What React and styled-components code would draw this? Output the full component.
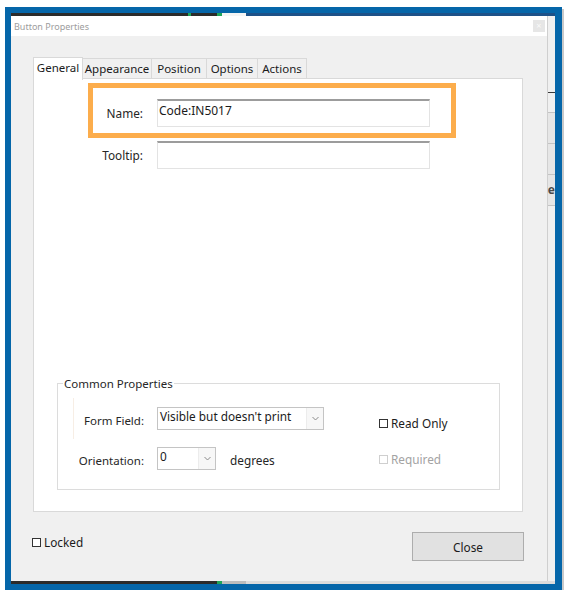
import React from "react";
import styled, { createGlobalStyle } from "styled-components";

const GlobalStyle = createGlobalStyle`
  body {
    margin: 0;
    background: #ffffff;
    font-family: "Noto Sans", "Open Sans", sans-serif;
    font-size: 11.5px;
    color: #1b1b1b;
  }
`;

const tabs = [
  { label: "General", w: 50, active: true },
  { label: "Appearance", w: 69 },
  { label: "Position", w: 55 },
  { label: "Options", w: 51 },
  { label: "Actions", w: 49 },
];

const Chevron = () => (
  <svg width="7" height="5" viewBox="0 0 7 5">
    <polyline points="0.5,1 3.5,4 6.5,1" fill="none" stroke="#8a8a8a" strokeWidth="1" />
  </svg>
);

export default () => {
  return <Page>
    <GlobalStyle />
    <Frame>
      <Strip>
        <Seg $w={177} $c="#2b2b2b" />
        <Seg $w={3} $c="#1fa55a" />
        <Seg $w={26} $c="#2b2b2b" />
        <Seg $w={5} $c="#1fa55a" />
        <Seg $w={24} $c="#f4f4f4" />
        <Seg $c="#1d5188" />
      </Strip>
      <Middle>
        <Dialog>
          <TitleBar>
            <Title>Button Properties</Title>
            <TitleClose>×</TitleClose>
          </TitleBar>
          <Body>
            <TabRow>
              {tabs.map(t => <Tab key={t.label} $w={t.w} $active={t.active}>{t.label}</Tab>)}
            </TabRow>
            <Panel>
              <Highlight>
                <FieldRow>
                  <Label>Name:</Label>
                  <TextBox>Code:IN5017</TextBox>
                </FieldRow>
              </Highlight>
              <TooltipRow>
                <Label>Tooltip:</Label>
                <TextBox />
              </TooltipRow>
              <Group>
                <Legend>Common Properties</Legend>
                <GroupBody>
                  <GroupLeft>
                    <PropRow $marked>
                      <PropLabel>Form Field:</PropLabel>
                      <Select $w={167}>
                        <span>Visible but doesn't print</span>
                        <Arrow><Chevron /></Arrow>
                      </Select>
                    </PropRow>
                    <PropRow>
                      <PropLabel>Orientation:</PropLabel>
                      <Select $w={59}>
                        <span>0</span>
                        <Arrow><Chevron /></Arrow>
                      </Select>
                      <Unit>degrees</Unit>
                    </PropRow>
                  </GroupLeft>
                  <GroupRight>
                    <Check><Box />Read Only</Check>
                    <Check $disabled><Box $disabled />Required</Check>
                  </GroupRight>
                </GroupBody>
              </Group>
            </Panel>
            <Footer>
              <Locked><Box />Locked</Locked>
              <CloseButton>Close</CloseButton>
            </Footer>
          </Body>
        </Dialog>
        <BackApp>
          <BackLine />
          <BackButton />
          <BackButton />
          <BackButton>e</BackButton>
        </BackApp>
      </Middle>
      <Strip>
        <Seg $w={206} $c="#2b2b2b" />
        <Seg $w={5} $c="#1fa55a" />
        <Seg $w={24} $c="#bdbdbd" />
        <Seg $c="#dcdcdc" />
      </Strip>
    </Frame>
  </Page>;
};

const Page = styled.div`
  padding: 7px 0 0 5px;
`;

const Frame = styled.div`
  width: 557px;
  height: 583px;
  box-sizing: border-box;
  border: 6px solid #0566a9;
  border-right-width: 7px;
  box-shadow: 2px 2px 0 #c9c9c9;
  display: flex;
  flex-direction: column;
  background: #f0f0f0;
`;

const Strip = styled.div`
  height: 3px;
  display: flex;
`;

const Seg = styled.div`
  background: ${p => p.$c};
  width: ${p => (p.$w ? p.$w + "px" : "auto")};
  flex: ${p => (p.$w ? "none" : 1)};
`;

const Middle = styled.div`
  flex: 1;
  display: flex;
`;

const Dialog = styled.div`
  width: 537px;
  display: flex;
  flex-direction: column;
  background: #f0f0f0;
  border-right: 1px solid #cfcfcf;
  box-sizing: border-box;
`;

const TitleBar = styled.div`
  height: 20px;
  background: #ffffff;
  display: flex;
  align-items: center;
  justify-content: space-between;
  padding: 0 2px 0 3px;
`;

const Title = styled.span`
  font-size: 9px;
  color: #9d9d9d;
`;

const TitleClose = styled.span`
  width: 12px;
  height: 12px;
  background: #e6e6e6;
  color: #fafafa;
  font-size: 9px;
  line-height: 12px;
  text-align: center;
`;

const Body = styled.div`
  flex: 1;
  padding: 21px 0 0 22px;
`;

const TabRow = styled.div`
  display: flex;
  align-items: flex-end;
  height: 22px;
`;

const Tab = styled.div`
  width: ${p => p.$w}px;
  height: ${p => (p.$active ? 23 : 21)}px;
  box-sizing: border-box;
  border: 1px solid #d9d9d9;
  border-bottom: ${p => (p.$active ? "none" : "1px solid #d9d9d9")};
  border-left-width: ${p => (p.$active ? 1 : 0)}px;
  background: ${p => (p.$active ? "#ffffff" : "#f0f0f0")};
  margin-bottom: ${p => (p.$active ? -1 : 0)}px;
  position: relative;
  z-index: ${p => (p.$active ? 1 : 0)};
  display: flex;
  align-items: ${p => (p.$active ? "flex-start" : "center")};
  padding-top: ${p => (p.$active ? 2 : 0)}px;
  justify-content: center;
  font-size: 11.5px;
  white-space: nowrap;
`;

const Panel = styled.div`
  width: 490px;
  height: 434px;
  box-sizing: border-box;
  border: 1px solid #d9d9d9;
  background: #ffffff;
  display: flex;
  flex-direction: column;
  margin-top: -1px;
`;

const Highlight = styled.div`
  width: 368px;
  height: 55px;
  box-sizing: border-box;
  border: 5px solid #fcad4c;
  margin: 4px 0 0 54px;
  padding-top: 11px;
`;

const FieldRow = styled.div`
  display: flex;
  align-items: center;
`;

const TooltipRow = styled(FieldRow)`
  margin: 3px 0 0 59px;
`;

const Label = styled.span`
  width: 50px;
  margin-right: 14px;
  text-align: right;
  font-size: 11.8px;
  color: #262626;
`;

const TextBox = styled.div`
  width: 273px;
  height: 28px;
  box-sizing: border-box;
  border: 1px solid #e3e3e3;
  border-top: 2px solid #9c9c9c;
  padding: 1px 1px;
  font-size: 12px;
  color: #1b1b1b;
`;

const Group = styled.fieldset`
  margin: auto 22px 21px 23px;
  padding: 0;
  height: 114px;
  box-sizing: border-box;
  border: 1px solid #dcdcdc;
`;

const Legend = styled.legend`
  margin-left: 5px;
  padding: 0 1px;
  font-size: 11.5px;
  color: #262626;
`;

const GroupBody = styled.div`
  display: flex;
  padding-top: 7px;
`;

const GroupLeft = styled.div`
  width: 321px;
  display: flex;
  flex-direction: column;
  gap: 8px;
  padding-left: 15px;
  box-sizing: border-box;
`;

const PropRow = styled.div`
  display: flex;
  align-items: center;
  height: ${p => (p.$marked ? 41 : 23)}px;
  border-left: 1px solid ${p => (p.$marked ? "#f7eee5" : "transparent")};
`;

const PropLabel = styled.span`
  width: 70px;
  margin-right: 13px;
  text-align: right;
  font-size: 11.5px;
  color: #262626;
  padding-top: 3px;
`;

const Select = styled.div`
  width: ${p => p.$w}px;
  height: 23px;
  box-sizing: border-box;
  border: 1px solid #c4c4c4;
  background: #ffffff;
  display: flex;
  align-items: flex-start;
  justify-content: space-between;
  padding-left: 2px;
  font-size: 11.8px;
  color: #1b1b1b;
`;

const Arrow = styled.span`
  width: 16px;
  align-self: stretch;
  display: flex;
  align-items: center;
  justify-content: center;
  border-left: 1px solid #ececec;
  background: #f7f7f7;
`;

const Unit = styled.span`
  margin-left: 14px;
  font-size: 11.8px;
  color: #262626;
  padding-top: 3px;
`;

const GroupRight = styled.div`
  display: flex;
  flex-direction: column;
  gap: 20px;
  padding: 17px 0 0 0;
`;

const Check = styled.label`
  display: flex;
  align-items: center;
  height: 16px;
  font-size: 11.8px;
  color: ${p => (p.$disabled ? "#a3a3a3" : "#1b1b1b")};
`;

const Box = styled.span`
  width: 9px;
  height: 9px;
  box-sizing: border-box;
  border: 1px solid ${p => (p.$disabled ? "#cfcfcf" : "#333333")};
  margin-right: 3px;
  background: #ffffff;
`;

const Footer = styled.div`
  width: 492px;
  display: flex;
  justify-content: space-between;
  align-items: flex-start;
  margin: 20px 0 0 -1px;
`;

const Locked = styled(Check)`
  margin-top: 2px;
`;

const CloseButton = styled.button`
  width: 112px;
  height: 29px;
  border: 1px solid #adadad;
  background: #e1e1e1;
  font-family: inherit;
  font-size: 11.8px;
  color: #1b1b1b;
  padding: 0;
`;

const BackApp = styled.div`
  flex: 1;
  background: #f0f0f0;
  padding-top: 76px;
`;

const BackLine = styled.div`
  height: 1px;
  background: #3a3a3a;
  margin-bottom: 19px;
`;

const BackButton = styled.div`
  height: 30px;
  border-top: 1px solid #c3c3c3;
  background: #e6e6e6;
  font-size: 12px;
  font-weight: bold;
  color: #4a4a4a;
  line-height: 30px;
  overflow: hidden;
  &:last-child {
    border-bottom: 1px solid #c3c3c3;
  }
`;
